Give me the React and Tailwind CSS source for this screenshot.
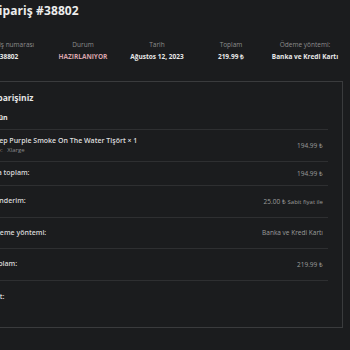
export default function App() {
  const font = { fontFamily: '"Open Sans", "Liberation Sans", sans-serif' };
  const cols = [
    ["Sipariş numarası", "38802", "text-[#e8e8e8]"],
    ["Durum", "HAZIRLANIYOR", "text-[#d9a3ab]"],
    ["Tarih", "Ağustos 12, 2023", "text-[#e8e8e8]"],
    ["Toplam", "219.99 ₺", "text-[#e8e8e8]"],
    ["Ödeme yöntemi:", "Banka ve Kredi Kartı", "text-[#e8e8e8]"],
  ];
  const rows = [
    ["Ara toplam:", <span>194.99 ₺</span>, "h-[24px]"],
    ["Gönderim:", <span>25.00 ₺ <span className="text-[6px]">Sabit fiyat ile</span></span>, "h-[32px]"],
    ["Ödeme yöntemi:", <span>Banka ve Kredi Kartı</span>, "h-[31px]"],
    ["Toplam:", <span>219.99 ₺</span>, "h-[32px]"],
  ];
  return (
    <div className="w-[350px] h-[350px] bg-[#1b1c1e] overflow-hidden" style={font}>
      <div className="ml-[-8px] pt-[2px] h-[20px] text-[12px] font-bold text-[#ececec] leading-[17px] tracking-[0.1px]">
        Sipariş #38802
      </div>
      <div className="flex ml-[-28px] mt-[20px] w-[400px]">
        {cols.map(([l, v, c]) => (
          <div key={l} className="w-[74px] shrink-0 flex flex-col items-center">
            <div className="text-[6.5px] text-[#8d8d8d] leading-[9px] whitespace-nowrap">{l}</div>
            <div className={"text-[6.5px] font-bold leading-[9px] mt-[3px] whitespace-nowrap " + c}>{v}</div>
          </div>
        ))}
      </div>
      <div className="ml-[-20px] mt-[20px] w-[363px] h-[247px] border border-[#3a3b3d] pl-[9px] pr-[14px]">
        <div className="h-[26px] pt-[10px] text-[8.5px] font-bold text-[#e6e6e6] leading-[12px]">Siparişiniz</div>
        <div className="h-[22px] border-b border-[#2e2f31] pt-[5px] text-[7px] font-bold text-[#e6e6e6] leading-[10px]">Ürün</div>
        <div className="h-[32px] border-b border-[#2e2f31] flex items-center justify-between pr-[5px]">
          <div className="flex flex-col">
            <div className="text-[7px] font-semibold text-[#dedede] leading-[10px]">Deep Purple Smoke On The Water Tişört × 1</div>
            <div className="text-[6px] text-[#8a8a8a] leading-[9px]">Size:&nbsp;&nbsp; Xlarge</div>
          </div>
          <div className="text-[6.5px] text-[#9c9c9c]">194.99 ₺</div>
        </div>
        {rows.map(([l, v, h]) => (
          <div key={l} className={"border-b border-[#2e2f31] flex items-center justify-between pr-[5px] " + h}>
            <div className="text-[7px] font-semibold text-[#d8d8d8]">{l}</div>
            <div className="text-[6.5px] text-[#9c9c9c]">{v}</div>
          </div>
        ))}
        <div className="pt-[11px] text-[7px] font-semibold text-[#d8d8d8] leading-[10px]">Not:</div>
      </div>
    </div>
  );
}
